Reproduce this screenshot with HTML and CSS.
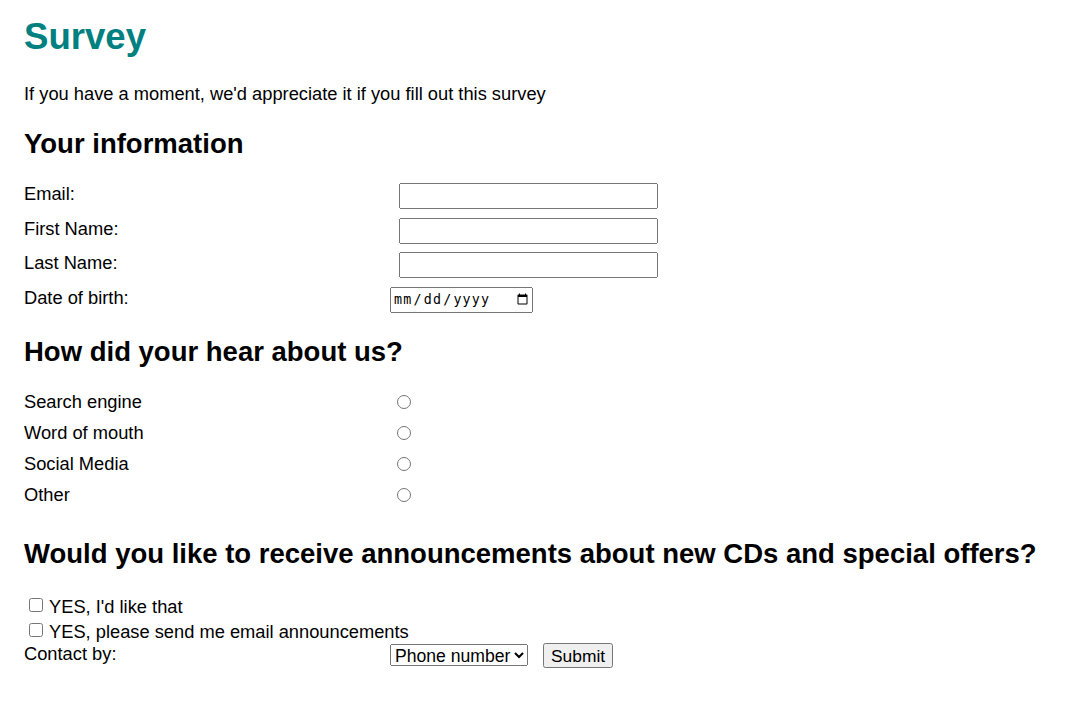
FILE: index.html
```html
<!DOCTYPE html>
<html lang="en">
<head>
<meta charset="utf-8">
<title>Survey</title>
<link rel="stylesheet" href="styles.css">
</head>
<body>
<main class="page">
  <h1 class="title">Survey</h1>
  <p class="intro">If you have a moment, we'd appreciate it if you fill out this survey</p>

  <form class="survey">
    <h2 class="section first">Your information</h2>
    <div class="fields">
      <label class="field-label" for="email">Email:</label>
      <input class="text-input" type="email" id="email">
      <label class="field-label" for="fname">First Name:</label>
      <input class="text-input" type="text" id="fname">
      <label class="field-label" for="lname">Last Name:</label>
      <input class="text-input" type="text" id="lname">
      <label class="field-label" for="dob">Date of birth:</label>
      <input class="date-input" type="date" id="dob">
    </div>

    <h2 class="section second">How did your hear about us?</h2>
    <div class="radios">
      <label class="field-label" for="r1">Search engine</label>
      <input class="radio" type="radio" name="hear" id="r1">
      <label class="field-label" for="r2">Word of mouth</label>
      <input class="radio" type="radio" name="hear" id="r2">
      <label class="field-label" for="r3">Social Media</label>
      <input class="radio" type="radio" name="hear" id="r3">
      <label class="field-label" for="r4">Other</label>
      <input class="radio" type="radio" name="hear" id="r4">
    </div>

    <h2 class="section third">Would you like to receive announcements about new CDs and special offers?</h2>
    <div class="checks">
      <label class="check-row"><input class="check" type="checkbox"> YES, I'd like that</label>
      <label class="check-row"><input class="check" type="checkbox"> YES, please send me email announcements</label>
    </div>
    <div class="contact-row">
      <label class="field-label contact-label" for="contact">Contact by:</label>
      <select class="select" id="contact">
        <option>Phone number</option>
        <option>Email</option>
      </select>
      <button class="submit" type="submit">Submit</button>
    </div>
  </form>
</main>
</body>
</html>
```

FILE: styles.css
```css
html, body {
  margin: 0;
  padding: 0;
  background: #ffffff;
}

body {
  font-family: "Liberation Sans", Arial, sans-serif;
  font-size: 18.3px;
  color: #000000;
}

.page {
  padding: 0 24px;
}

.title {
  margin: 16px 0 0;
  font-size: 36.6px;
  line-height: 42px;
  font-weight: bold;
  color: #008080;
}

.intro {
  margin: 25px 0 0;
  line-height: 21px;
}

.survey {
  margin: 0;
}

.section {
  margin: 0;
  font-size: 27.5px;
  line-height: 31px;
  font-weight: bold;
}

.section.first { margin-top: 24px; }
.section.second { margin-top: 23px; }
.section.third { margin-top: 33px; }

.field-label {
  line-height: 21px;
}

.fields {
  margin-top: 24px;
  display: grid;
  grid-template-columns: 366px auto;
  row-gap: 8.67px;
  justify-items: start;
  align-items: start;
}

.text-input {
  box-sizing: border-box;
  width: 259px;
  height: 26px;
  margin: 0 0 0 9px;
}

.date-input {
  box-sizing: border-box;
  width: 143px;
  height: 26px;
  margin: 0;
  font-family: monospace;
  font-size: 13.333px;
  letter-spacing: 1.2px;
}

.radios {
  margin-top: 24px;
  display: grid;
  grid-template-columns: 366px auto;
  row-gap: 10px;
  justify-items: start;
  align-items: start;
}

.radio {
  width: 14px;
  height: 14px;
  margin: 4px 0 0 7px;
}

.checks {
  margin-top: 27px;
  display: flex;
  flex-direction: column;
  gap: 3.7px;
}

.check-row {
  display: flex;
  align-items: flex-start;
  line-height: 21px;
}

.check {
  width: 14px;
  height: 14px;
  margin: 2px 6px 0 5px;
}

.contact-row {
  margin-top: 1px;
  display: flex;
  align-items: flex-start;
}

.contact-label {
  width: 366px;
  flex: none;
}

.select {
  box-sizing: border-box;
  width: 138px;
  height: 22px;
  margin: 1px 0 0;
  font-family: "Liberation Sans", Arial, sans-serif;
  font-size: 17.6px;
}

.submit {
  box-sizing: border-box;
  width: 70px;
  height: 25px;
  margin: 0 0 0 15px;
  font-family: "Liberation Sans", Arial, sans-serif;
  font-size: 17.4px;
}
```
